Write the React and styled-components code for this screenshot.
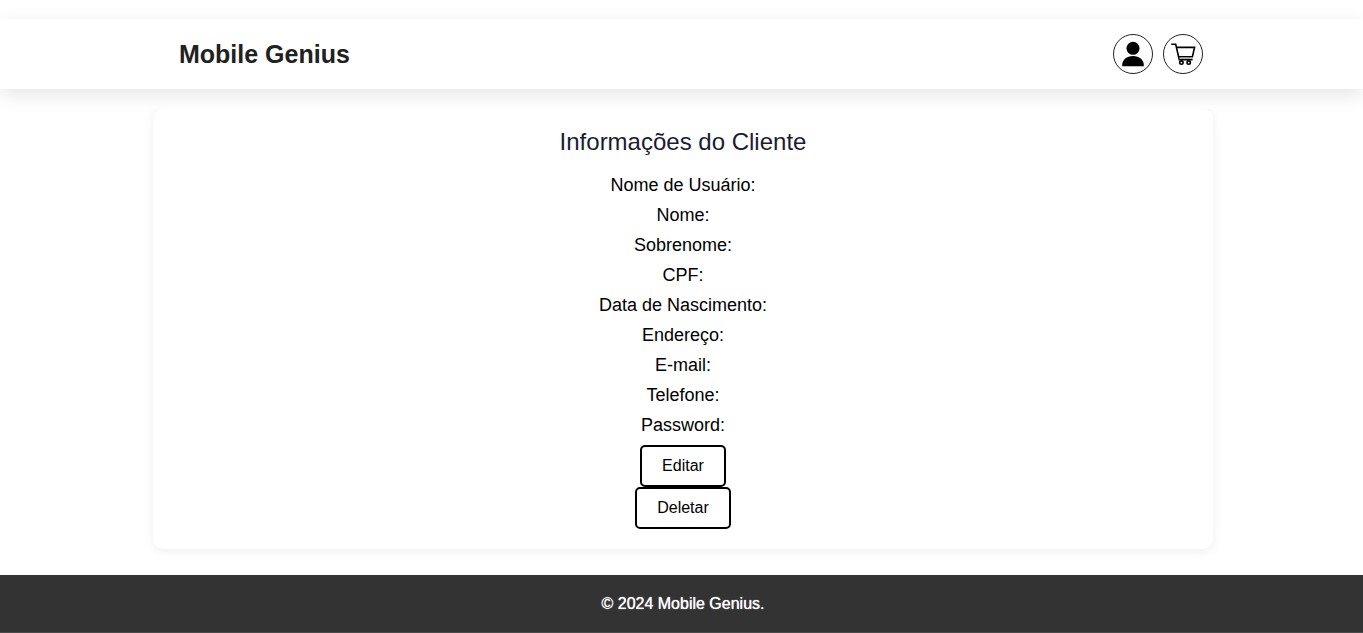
import React from "react";
import styled, { createGlobalStyle } from "styled-components";

const GlobalStyle = createGlobalStyle`
  *, *::before, *::after { box-sizing: border-box; }
  body {
    margin: 0;
    background: #fff;
    color: #000;
    font-family: "Liberation Sans", Arial, sans-serif;
  }
  h1, h2, ul, p { margin: 0; padding: 0; font-weight: 400; }
`;

const Page = styled.div`
  display: flex;
  flex-direction: column;
  min-height: 100vh;
  padding-top: 19px;
`;

const Header = styled.header`
  padding: 15px 0 15px 3px;
  background: #fff;
  box-shadow: 0 6px 18px rgba(0, 0, 0, 0.1);
`;

const HeaderContent = styled.div`
  display: flex;
  align-items: center;
  justify-content: space-between;
  max-width: 1060px;
  margin: 0 auto;
  padding: 0 10px 0 26px;
`;

const Brand = styled.a`
  color: #212121;
  font-size: 25px;
  font-weight: 700;
  line-height: 40px;
  text-decoration: none;
`;

const Actions = styled.nav`
  display: flex;
  gap: 10px;
`;

const IconButton = styled.button`
  display: flex;
  align-items: center;
  justify-content: center;
  width: 40px;
  height: 40px;
  padding: 0;
  border: 1px solid #222;
  border-radius: 50%;
  background: #fff;
  color: #000;
  cursor: pointer;
`;

const Main = styled.main`
  flex: 1;
  margin-top: 20px;
  padding: 0 0 26px 3px;
  overflow: hidden;
`;

const Card = styled.section`
  display: flex;
  flex-direction: column;
  align-items: center;
  max-width: 1060px;
  margin: 0 auto;
  padding: 20px;
  border-radius: 10px;
  background: #fff;
  box-shadow: 0 2px 12px rgba(0, 0, 0, 0.07);
`;

const Title = styled.h1`
  margin-bottom: 20px;
  color: #1b1b32;
  font-size: 24px;
  line-height: 26px;
`;

const Fields = styled.ul`
  display: flex;
  flex-direction: column;
  gap: 10px;
  margin-bottom: 10px;
  list-style: none;
  text-align: center;
`;

const Field = styled.li`
  font-size: 18px;
  line-height: 20px;
`;

const Button = styled.button`
  padding: 10px 20px;
  border: 2px solid #000;
  border-radius: 5px;
  background: #fff;
  color: #000;
  font-family: inherit;
  font-size: 16px;
  line-height: 18px;
  cursor: pointer;
`;

const Footer = styled.footer`
  padding: 20px 0 20px 3px;
  border-bottom: 1px solid #4a4a4a;
  background: #333;
  color: #fff;
  font-size: 16px;
  line-height: 17px;
  text-align: center;
  text-shadow: 0 0 1px #fff;
`;

const UserIcon = () => (
  <svg width="38" height="38" viewBox="0 0 38 38" fill="currentColor" aria-hidden="true">
    <circle cx="19" cy="13.3" r="6.5" />
    <path d="M8.2 31.2v-1.4c0-5 4.4-8.9 10.8-8.9s10.8 3.9 10.8 8.9v1.4z" />
  </svg>
);

const CartIcon = () => (
  <svg width="38" height="38" viewBox="0 0 38 38" fill="none" stroke="currentColor" aria-hidden="true">
    <path d="M7.3 9.2h4.4l3.6 15.4h13.3" strokeWidth="1.6" />
    <path d="M12.5 12.4h18.1l-2.2 9.4H14.8" strokeWidth="1.6" />
    <path d="M15.4 23.2h13.2" stroke="#aaa" strokeWidth="1" />
    <circle cx="17.4" cy="27.6" r="1.7" strokeWidth="1.6" />
    <circle cx="24.7" cy="27.6" r="1.7" strokeWidth="1.6" />
  </svg>
);

const fields = [
  "Nome de Usuário:",
  "Nome:",
  "Sobrenome:",
  "CPF:",
  "Data de Nascimento:",
  "Endereço:",
  "E-mail:",
  "Telefone:",
  "Password:",
];

export default function App() {
  return (
    <>
      <GlobalStyle />
      <Page>
        <Header>
          <HeaderContent>
            <Brand href="#">Mobile Genius</Brand>
            <Actions>
              <IconButton type="button" aria-label="Perfil"><UserIcon /></IconButton>
              <IconButton type="button" aria-label="Carrinho"><CartIcon /></IconButton>
            </Actions>
          </HeaderContent>
        </Header>
        <Main>
          <Card>
            <Title>Informações do Cliente</Title>
            <Fields>
              {fields.map((label) => <Field key={label}>{label}</Field>)}
            </Fields>
            <Button type="button">Editar</Button>
            <Button type="button">Deletar</Button>
          </Card>
        </Main>
        <Footer>© 2024 Mobile Genius.</Footer>
      </Page>
    </>
  );
}
